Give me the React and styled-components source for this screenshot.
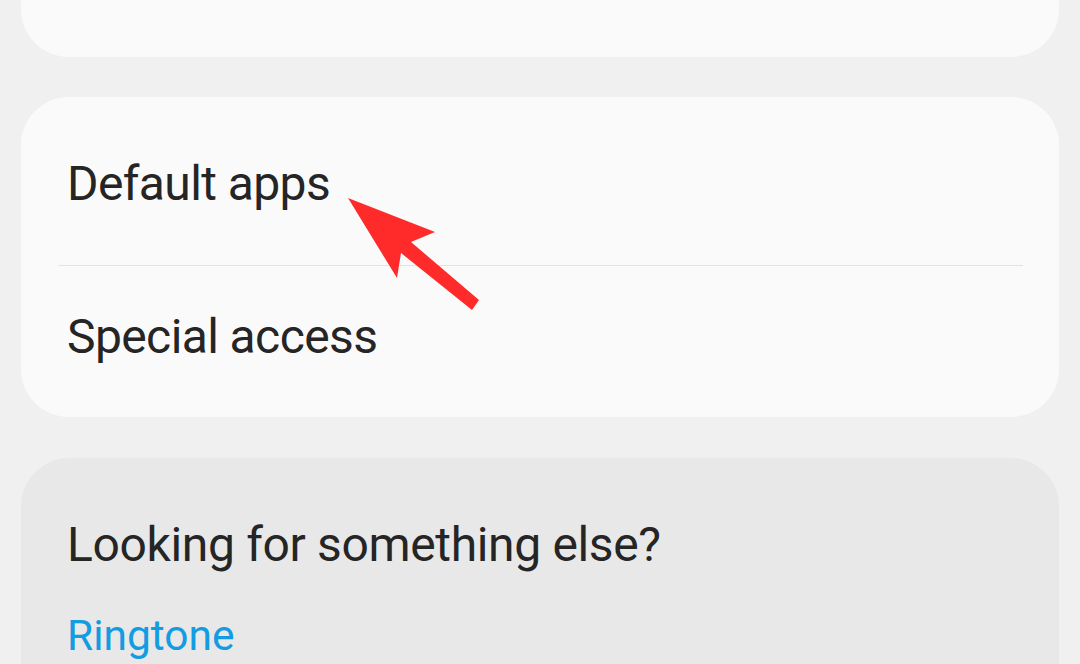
import React from "react";
import styled, { createGlobalStyle } from "styled-components";

const GlobalStyle = createGlobalStyle`
  html, body {
    margin: 0;
    padding: 0;
    background: #f0f0f0;
  }
  * {
    box-sizing: border-box;
  }
`;

const Screen = styled.div`
  position: relative;
  width: 1080px;
  height: 664px;
  overflow: hidden;
  background: #f0f0f0;
  padding: 0 21px;
  font-family: Roboto, "Liberation Sans", sans-serif;
  color: #252525;
`;

const Card = styled.div`
  width: 1038px;
  background: ${(p) => (p.$muted ? "#e8e8e8" : "#fafafa")};
  border-radius: 48px;
  margin-top: ${(p) => p.$offset || 0}px;
  padding-top: ${(p) => p.$padTop || 0}px;
`;

const Row = styled.div`
  height: ${(p) => p.$height || 152}px;
  padding: ${(p) => p.$padTop || 42}px 46px 0;
  font-size: 48px;
  line-height: 1.2;
  letter-spacing: -0.6px;
  white-space: nowrap;
`;

const Divider = styled.div`
  height: 1px;
  margin: 0 36px 0 37px;
  background: #e3e3e3;
`;

const SuggestBox = styled.div`
  padding: 58px 46px 0;
`;

const SuggestTitle = styled.div`
  font-size: 48px;
  line-height: 1.2;
  letter-spacing: -0.35px;
`;

const SuggestLink = styled.div`
  margin-top: 36px;
  font-size: 42.5px;
  line-height: 1.2;
  color: #139ce2;
  height: 120px;
`;

const Pointer = styled.svg`
  position: absolute;
  left: 340px;
  top: 190px;
  width: 150px;
  height: 125px;
  pointer-events: none;
`;

const App = () => {
  return (
    <>
      <GlobalStyle />
      <Screen>
        <Card $offset={-95}>
          <Row $padTop={37}>Samsung app settings</Row>
        </Card>

        <Card $offset={40} $padTop={16}>
          <Row>Default apps</Row>
          <Divider />
          <Row $height={151}>Special access</Row>
        </Card>

        <Card $offset={41} $muted>
          <SuggestBox>
            <SuggestTitle>Looking for something else?</SuggestTitle>
            <SuggestLink>Ringtone</SuggestLink>
          </SuggestBox>
        </Card>

        <Pointer viewBox="340 190 150 125">
          <polygon
            points="348,198 435,232 411,242 479,300 472,310 401,253 397,278"
            fill="#ff2b2b"
          />
        </Pointer>
      </Screen>
    </>
  );
};

export default App;
